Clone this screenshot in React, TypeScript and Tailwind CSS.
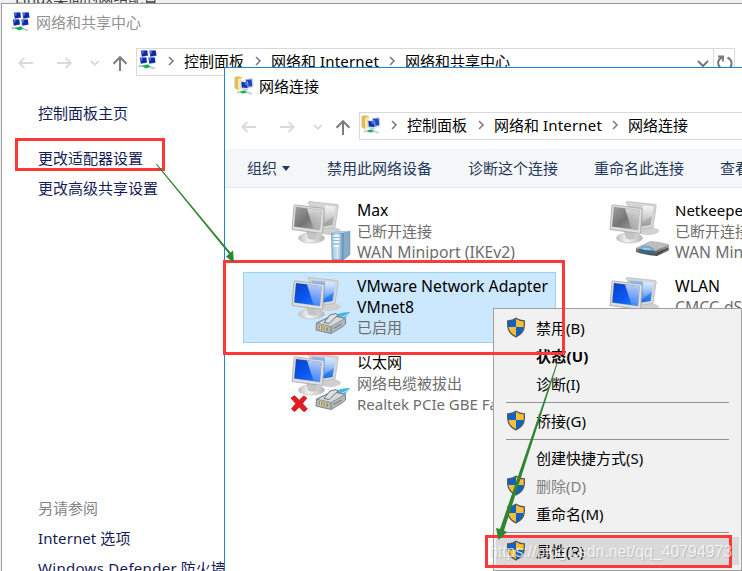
import React from "react";

function MonitorsSmall({ className = "" }: { className?: string }) {
  const cells = [
    [3, 0.5],
    [11.5, 0.5],
    [2, 7.5],
    [10.5, 7.5],
  ];
  return (
    <svg className={`shrink-0 ${className}`} width="20" height="20" viewBox="0 0 20 20">
      {cells.map(([x, y]) => (
        <g key={`${x}-${y}`}>
          <path d={`M${x - 0.5} ${y}l7 -.4l.8 6l-6.800 1z`} fill="#b4c2dc" />
          <path d={`M${x} ${y + 0.3}l6.200 -.4l.7 5.200l-6 .9z`} fill="#1027a8" />
          <path d={`M${x + 0.4} ${y + 0.5}l2.400 -.2l-.4 2.400l-1.700 1.200z`} fill="#4a6ee6" />
        </g>
      ))}
      <path d="M0.500 16L9 16L17 18.500" stroke="#b9c6cc" strokeWidth="1.800" fill="none" />
      <path d="M4 16.200l6 -2l2.300 2.600l-4.300 1.600z" fill="#10b34a" />
    </svg>
  );
}

function FolderNetSmall({ className = "" }: { className?: string }) {
  return (
    <svg className={`shrink-0 ${className}`} width="20" height="20" viewBox="0 0 20 20">
      <path d="M0.500 1l4 -.7l3.500 1v11l-4 2L0.500 12z" fill="#e0bd5c" />
      <path d="M4 3l4 -1.500v11l-4 2z" fill="#fbe7a6" />
      <path d="M11 3l7.500 -.8l.7 9l-7 1z" fill="#b4c6e2" />
      <path d="M12 4l5.600 -.6l.5 6.600l-5.500 1z" fill="#1b45c9" />
      <path d="M6.500 5.300l7.500 .5l.5 7l-7.500 -.5z" fill="#b9c8e2" />
      <path d="M7.500 6.100l5.700 .4l.4 5.500l-5.700 -.5z" fill="#1230b5" />
      <path d="M10 6.300l3.200 .2l.1 2l-2.300 1z" fill="#4a6ce4" />
      <path d="M8 12.500l5 .5l2 1.500l-6 .3z" fill="#c9ced6" />
      <path d="M3 16.500L11 15.500L18 18" stroke="#c2cfd3" strokeWidth="1.8" fill="none" />
      <path d="M6 15.500l4.500 -1l2.500 2.500l-5 .6z" fill="#17b55a" />
    </svg>
  );
}

function NavArrows() {
  return (
    <svg className="shrink-0" width="112" height="18" viewBox="0 0 112 18" fill="none">
      <path d="M17 9H3M8.500 3.800L3.200 9l5.300 5.200" stroke="#dadada" strokeWidth="1.8" />
      <path d="M41 9h14M49.500 3.800L54.800 9l-5.300 5.200" stroke="#dadada" strokeWidth="1.8" />
      <path d="M75 7l3.800 3.800L82.600 7" stroke="#d5d5d5" strokeWidth="1.700" />
      <path d="M104 17V3.500M97.500 9.700L104 3.200l6.500 6.500" stroke="#7c7c7c" strokeWidth="2" />
    </svg>
  );
}

function Chevron() {
  return (
    <span className="flex w-[27px] shrink-0 justify-center">
      <svg width="8" height="10" viewBox="0 0 8 10" fill="none">
        <path d="M2 1l4 4l-4 4" stroke="#7d7d7d" strokeWidth="1.6" />
      </svg>
    </span>
  );
}

function Crumbs({ last }: { last: string }) {
  return (
    <div className="-ml-px flex items-center pb-[2px] whitespace-nowrap text-black">
      <Chevron />
      <span>控制面板</span>
      <Chevron />
      <span className="w-[107px]">
        网络和 <span className="tracking-[0.2px]">Internet</span>
      </span>
      <Chevron />
      <span>{last}</span>
    </div>
  );
}

type Badge = "server" | "modem" | "cable" | "none";

function AdapterIcon({ on, badge, broken }: { on: boolean; badge: Badge; broken?: boolean }) {
  const screen = on ? "url(#screenOn)" : "url(#screenOff)";
  const back = on ? "url(#backOn)" : "url(#backOff)";
  return (
    <svg className="shrink-0" width="66" height="66" viewBox="0 0 66 66">
      <defs>
        <linearGradient id="screenOn" x1="0" y1="0" x2="1" y2="1">
          <stop offset="0" stopColor="#0a3fc4" />
          <stop offset=".5" stopColor="#0b56ee" />
          <stop offset="1" stopColor="#1f7dff" />
        </linearGradient>
        <linearGradient id="backOn" x1="0" y1="0" x2="0" y2="1">
          <stop offset="0" stopColor="#8fc2f8" />
          <stop offset="1" stopColor="#1668ee" />
        </linearGradient>
        <linearGradient id="screenOff" x1="0" y1="0" x2="1" y2="1">
          <stop offset="0" stopColor="#a0a0a0" />
          <stop offset=".5" stopColor="#757575" />
          <stop offset="1" stopColor="#a8a8a8" />
        </linearGradient>
        <linearGradient id="backOff" x1="0" y1="0" x2="0" y2="1">
          <stop offset="0" stopColor="#d8d8d8" />
          <stop offset="1" stopColor="#9c9c9c" />
        </linearGradient>
        <linearGradient id="glare" x1="0" y1="0" x2="0" y2="1">
          <stop offset="0" stopColor="#fff" stopOpacity=".72" />
          <stop offset="1" stopColor="#fff" stopOpacity=".15" />
        </linearGradient>
        <linearGradient id="base" x1="0" y1="0" x2="1" y2="0">
          <stop offset="0" stopColor="#c0c0c0" />
          <stop offset=".4" stopColor="#f4f4f4" />
          <stop offset="1" stopColor="#b5b5b5" />
        </linearGradient>
        <linearGradient id="tower" x1="0" y1="0" x2="1" y2="0">
          <stop offset="0" stopColor="#93bedc" />
          <stop offset=".5" stopColor="#d3e7f4" />
          <stop offset="1" stopColor="#5f8fb4" />
        </linearGradient>
        <linearGradient id="box" x1="0" y1="0" x2="0" y2="1">
          <stop offset="0" stopColor="#d0d0d0" />
          <stop offset="1" stopColor="#444444" />
        </linearGradient>
      </defs>
      <ellipse cx="42" cy="33" rx="11" ry="4" fill="#d0d0d0" />
      <path d="M20 4.500Q20 3.500 21.500 3.600L49 6.500Q50.500 6.700 50.200 8L47 29.500L36 31z" fill="#d6d6d6" stroke="#b4b4b4" strokeWidth=".7" />
      <path d="M23 6.200L47.500 8.500L44.500 27L35 28.500z" fill={back} />
      <path d="M37 7.500L47.500 8.500L46 18L36 25z" fill="url(#glare)" />
      <ellipse cx="23.500" cy="40" rx="13" ry="5" fill="url(#base)" stroke="#bcbcbc" strokeWidth=".7" />
      <path d="M18 33l10 1.500l1 6q-5 2 -9 0z" fill="#c4c4c4" />
      <path d="M6 8Q6 6.700 7.500 6.900L34.500 10.300Q36.300 10.500 36.200 12L34.500 35.500L4 31.500z" fill="#dfdfdf" stroke="#a3a3a3" strokeWidth=".8" />
      <path d="M8 9L33.500 12.200L32 32L6.200 28.500z" fill={screen} stroke="#777" strokeOpacity=".35" strokeWidth=".6" />
      <path d="M19 10.400L33.500 12.200L32 32L25.500 31.100z" fill="url(#glare)" />
      {badge === "server" && (
        <g>
          <path d="M44 36l6 -3h12v23l-5 5l-13 1z" fill="#81a9c7" />
          <path d="M43.500 35h12l-.5 27l-11 -.5z" fill="url(#tower)" stroke="#6089a6" strokeWidth=".6" />
          <path d="M55.500 35l6.500 -2v23.500l-7 5.500z" fill="#85accb" stroke="#6089a6" strokeWidth=".5" />
          <path d="M43.500 35l5 -2h13.500l-6.500 2z" fill="#a9cbe2" />
          <path d="M45.500 38h6M45.500 41h6M45.500 44h6M45.500 48h6" stroke="#f8fcff" strokeWidth="1.300" />
          <path d="M45.500 39.500h6M45.500 42.500h6M45.500 46h6" stroke="#79a5c5" strokeWidth=".7" />
        </g>
      )}
      {badge === "modem" && (
        <g>
          <path d="M30 50l14 -7q9 0 19 3.500v6L51 58q-12 -1 -21 -4z" fill="url(#box)" />
          <path d="M30.500 50l13.500 -6.500q9 0 18 3.300L50 52.500q-11 .2 -19.500 -2.500z" fill="#bdbdbd" />
          <path d="M33 50.800q8 2.200 15 2.200v3.200q-8 -.4 -15 -2.700z" fill="#276b90" />
          <path d="M34 50.500q6 -4.500 14 1.500" stroke="#5fb0d4" strokeWidth="2" fill="none" />
          <path d="M51 55.500l11 -5" stroke="#333" strokeWidth="1" />
        </g>
      )}
      {badge === "cable" && (
        <g strokeLinejoin="round">
          <path d="M47 41q7 -3 15.500 -3q-3 2 -3.500 4q-3 4 -8 5z" fill="#45b5dd" />
          <path d="M53 43.500l8 -3.500" stroke="#b7e8f7" strokeWidth="1" />
          <path d="M28.500 49l16 -7.500l13 3v5.500l-3.500 3l-11 6.500l-15 -3.500z" fill="#b3b8bb" stroke="#737b80" strokeWidth=".9" />
          <path d="M29 49.200l14 3.300l14 -8l-12.500 -2.800z" fill="#d5d9db" stroke="#7f878b" strokeWidth=".8" />
          <path d="M43 52.500v6.200" stroke="#70787c" strokeWidth=".9" />
          <path d="M36 48.500l6 -7.500l6 -1.500l2 1.500l-9 8.500z" fill="#dce1e3" stroke="#626b70" strokeWidth=".9" />
          <path d="M31 51.500l9 2.200v3l-9 -2.100z" fill="#999155" />
          <path d="M32.500 52v3M35 52.500v3M37.500 53v3" stroke="#efe47f" strokeWidth=".9" />
          <path d="M45.500 54.500l8 -4.500" stroke="#7b8488" strokeWidth="1.400" />
        </g>
      )}
      {broken && (
        <path
          d="M3 48l3.500 -2.200l4.700 4.500l4.500 -4.300l3.100 2l-4.300 5.500l4.800 5.500l-3.300 2.800l-4.700 -4.800l-4.700 4.500l-3.100 -2.500l4.300 -5.500z"
          fill="#e31c24"
          stroke="#b90d14"
          strokeWidth=".8"
          strokeLinejoin="round"
        />
      )}
    </svg>
  );
}

interface Line {
  text: string;
  size?: string;
}

interface AdapterProps {
  name: Line[];
  lines: Line[];
  on: boolean;
  badge: Badge;
  broken?: boolean;
  selected?: boolean;
}

const LATIN = "text-[15.75px]";

function Adapter({ name, lines, on, badge, broken, selected }: AdapterProps) {
  return (
    <div
      className={`flex h-[71px] w-[313px] shrink-0 border pt-px pl-[44px] ${
        selected ? "border-[#99d1ff] bg-[#cce8ff]" : "border-transparent"
      }`}
    >
      <AdapterIcon on={on} badge={badge} broken={broken} />
      <div className="pt-[2px] pl-[3px] whitespace-nowrap">
        {name.map((n) => (
          <p key={n.text} className={`text-black ${n.size ?? ""} ${selected ? "leading-[20.5px]" : "leading-[21px]"}`}>
            {n.text}
          </p>
        ))}
        {lines.map((l) => (
          <p key={l.text} className={`leading-[21px] text-[#6d6d6d] ${l.size ?? ""}`}>
            {l.text}
          </p>
        ))}
      </div>
    </div>
  );
}

function Shield() {
  return (
    <svg width="20" height="21" viewBox="0 0 20 21">
      <clipPath id="shieldClip">
        <path d="M10 1.500Q13.500 4 18 4V9Q17.500 16 10 19.500Q2.500 16 2 9V4Q6.500 4 10 1.500z" />
      </clipPath>
      <g clipPath="url(#shieldClip)">
        <path d="M0 0h10v10H0z" fill="#0d63c5" />
        <path d="M10 0h10v10H10z" fill="#ffbd35" />
        <path d="M0 10h10v11H0z" fill="#ffbd35" />
        <path d="M10 10h10v11H10z" fill="#0d63c5" />
      </g>
      <path d="M10 1.200Q13.500 3.800 18.300 3.800V9Q17.800 16.300 10 19.800Q2.200 16.300 1.700 9V3.800Q6.500 3.800 10 1.200z" fill="none" stroke="#4d555d" strokeWidth="1.300" />
    </svg>
  );
}

interface ItemProps {
  label: string;
  shield?: boolean;
  bold?: boolean;
  disabled?: boolean;
  active?: boolean;
}

function MenuItem({ label, shield, bold, disabled, active }: ItemProps) {
  return (
    <div className={`mx-[2px] flex h-7 items-center ${active ? "bg-[#d9d9d9]" : ""}`}>
      <span className="flex w-10 shrink-0 pb-px pl-[10px]">{shield && <Shield />}</span>
      <span className={`whitespace-nowrap ${bold ? "font-bold tracking-[0.2px]" : ""} ${disabled ? "text-[#818181]" : "text-black"}`}>
        {label}
      </span>
    </div>
  );
}

function Separator() {
  return (
    <div className="flex h-[9px] items-center pr-3 pl-3">
      <span className="h-px w-full bg-[#929292]" />
    </div>
  );
}

function ContextMenu() {
  return (
    <div className="absolute top-[308px] left-[493px] h-[263px] w-[249px] border border-[#a0a0a0] bg-[#f1f1f1] pt-[5px]">
      <MenuItem label="禁用(B)" shield />
      <MenuItem label="状态(U)" bold />
      <MenuItem label="诊断(I)" />
      <Separator />
      <MenuItem label="桥接(G)" shield />
      <Separator />
      <MenuItem label="创建快捷方式(S)" />
      <MenuItem label="删除(D)" shield disabled />
      <MenuItem label="重命名(M)" shield />
      <Separator />
      <MenuItem label="属性(R)" shield active />
    </div>
  );
}

function SharingCenter() {
  return (
    <section className="absolute top-[3px] left-px h-[568px] w-[741px] overflow-hidden border-t border-l border-[#999] bg-white">
      <header className="flex h-[37px] items-center pl-[9px] text-[#929292]">
        <MonitorsSmall className="mb-[2px]" />
        <span className="pb-px pl-[5px]">网络和共享中心</span>
      </header>
      <div className="flex h-[44px] items-center pl-[14px]">
        <NavArrows />
        <div className="mb-[2px] ml-2 flex h-7 w-[599px] items-center border border-[#d9d9d9] pl-px">
          <MonitorsSmall className="mb-1" />
          <Crumbs last="网络和共享中心" />
          <svg className="ml-auto" width="44" height="26" viewBox="0 0 44 26" fill="none">
            <path d="M8 12l5 5l5 -5" stroke="#777" strokeWidth="2" />
            <path d="M23.500 0V26" stroke="#d9d9d9" />
            <path d="M32 8.500C26.500 11 27 18 33 20M37.500 8.500C43 11 42.500 18 38.500 20" stroke="#777" strokeWidth="2" />
            <path d="M28 7.500h5v5" stroke="#777" strokeWidth="1.800" />
          </svg>
        </div>
      </div>
      <nav className="flex h-[486px] flex-col pt-[17px] pl-9 leading-[22px] whitespace-nowrap text-[#151c55]">
        <a>控制面板主页</a>
        <a className="mt-[23px]">更改适配器设置</a>
        <a className="mt-2">更改高级共享设置</a>
        <span className="mt-[298px] text-[#858585]">另请参阅</span>
        <a className="mt-2 tracking-[0.1px]">Internet 选项</a>
        <a className="mt-2">
          <span className="tracking-[0.3px]">Windows Defender</span> 防火墙
        </a>
      </nav>
    </section>
  );
}

function Connections() {
  return (
    <section className="absolute top-[67px] left-[224px] h-[504px] w-[518px] overflow-hidden border-t border-l border-[#1883d7] bg-white">
      <header className="flex h-[37px] items-center pl-[9px] text-black">
        <FolderNetSmall className="mb-[2px]" />
        <span className="pb-px pl-[5px]">网络连接</span>
      </header>
      <div className="flex h-[44px] items-center pl-[14px]">
        <NavArrows />
        <div className="mb-[2px] ml-2 flex h-7 w-[600px] shrink-0 items-center border border-[#d9d9d9] pl-px">
          <FolderNetSmall className="mb-[3px]" />
          <Crumbs last="网络连接" />
        </div>
      </div>
      <div className="flex h-[39px] items-center gap-9 border-b border-[#e8e8e9] bg-[#f5f6f7] pl-[22px] whitespace-nowrap text-[#1e395b]">
        <span className="flex items-center gap-[5px] pr-px">
          组织
          <span className="border-x-[4.5px] border-t-[5px] border-x-transparent border-t-[#1e395b]" />
        </span>
        <span>禁用此网络设备</span>
        <span>诊断这个连接</span>
        <span>重命名此连接</span>
        <span>查看此连接的状态</span>
      </div>
      <div className="grid grid-cols-[313px_313px] gap-[5px] pt-2 pl-[18px]">
        <Adapter
          name={[{ text: "Max", size: LATIN }]}
          lines={[{ text: "已断开连接" }, { text: "WAN Miniport (IKEv2)", size: LATIN }]}
          on={false}
          badge="server"
        />
        <Adapter
          name={[{ text: "Netkeeper" }]}
          lines={[{ text: "已断开连接" }, { text: "WAN Miniport (PPPOE)", size: LATIN }]}
          on={false}
          badge="modem"
        />
        <Adapter
          name={[
            { text: "VMware Network Adapter", size: LATIN },
            { text: "VMnet8", size: LATIN },
          ]}
          lines={[{ text: "已启用" }]}
          on
          badge="cable"
          selected
        />
        <Adapter name={[{ text: "WLAN", size: LATIN }]} lines={[{ text: "CMCC-dSYJ", size: LATIN }]} on badge="none" />
        <Adapter
          name={[{ text: "以太网" }]}
          lines={[{ text: "网络电缆被拔出" }, { text: "Realtek PCIe GBE Family", size: "text-[15px]" }]}
          on
          badge="cable"
          broken
        />
      </div>
    </section>
  );
}

export default function App() {
  return (
    <main className="relative h-[571px] w-[742px] overflow-hidden bg-[#f0f0f0] font-['Noto_Sans','Noto_Sans_CJK_SC',sans-serif] text-[15px] leading-[21px]">
      <p className="-mt-[12px] pl-[15px] leading-[20px] text-[#444]">Linux桌面的网络配置</p>
      <SharingCenter />
      <Connections />
      <ContextMenu />
      <div className="absolute top-[138px] left-[15px] h-[33px] w-[150px] border-[3px] border-[#ff3737]" />
      <div className="absolute top-[260px] left-[223px] h-[95px] w-[342px] border-[3px] border-[#ff3737]" />
      <div className="absolute top-[535px] left-[485px] h-[33px] w-[247px] border-[3px] border-[#ff3737]" />
      <svg className="absolute inset-0" width="742" height="571" viewBox="0 0 742 571">
        <g fill="#308530">
          <path d="M156 164.500L229 254L226 256.500L234 263L233 250.500L230.500 252.500L156.800 163.800z" />
          <path d="M557 362L500 529L496 528L498.500 540L507 532L504 530.500L558 362z" />
        </g>
      </svg>
      <span className="absolute top-[542px] left-[489px] font-['Liberation_Sans',sans-serif] text-[15.85px] leading-5 whitespace-nowrap text-white/75 [text-shadow:1px_1px_1px_rgba(0,0,0,0.15)]">
        https://blog.csdn.net/qq_40794973
      </span>
    </main>
  );
}
